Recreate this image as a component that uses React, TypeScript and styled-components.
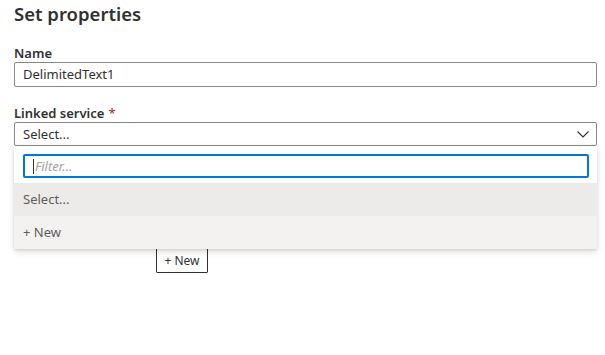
import React from 'react';
import styled, { createGlobalStyle } from 'styled-components';

const GlobalStyle = createGlobalStyle`
  body {
    margin: 0;
    background: #fff;
    font-family: "Segoe UI", "Noto Sans", "Liberation Sans", sans-serif;
    color: #323130;
  }
`;

const Page = styled.div`
  width: 605px;
  height: 355px;
  padding: 0 8px 0 14px;
  box-sizing: border-box;
  overflow: hidden;
`;

const Title = styled.h2`
  margin: 0;
  padding-top: 1px;
  font-size: 18.5px;
  font-weight: 600;
  line-height: 26px;
`;

const Field = styled.div<{ $top: number }>`
  margin-top: ${(p) => p.$top}px;
  position: relative;
`;

const Label = styled.label`
  display: block;
  font-size: 13px;
  font-weight: 600;
  line-height: 18px;
  margin-bottom: 0;
`;

const Required = styled.span`
  color: #a4262c;
  font-weight: 400;
  margin-left: 4px;
`;

const TextBox = styled.div`
  height: 25px;
  box-sizing: border-box;
  border: 1px solid #8a8886;
  border-radius: 2px;
  padding: 0 8px;
  font-size: 13px;
  line-height: 23px;
  color: #323130;
`;

const SelectBox = styled(TextBox)`
  display: flex;
  align-items: center;
  justify-content: space-between;
  height: 24px;
  line-height: 22px;
  padding-right: 6px;
`;

const Panel = styled.div`
  position: absolute;
  left: 0;
  right: 0;
  top: 100%;
  background: #fff;
  box-shadow: 0 3px 7px rgba(0, 0, 0, 0.13), 0 1px 2px rgba(0, 0, 0, 0.1);
  z-index: 10;
`;

const FilterWrap = styled.div`
  padding: 8px 8px 5px 9px;
`;

const FilterBox = styled.div`
  height: 24px;
  box-sizing: border-box;
  border: 2px solid #0078d4;
  border-radius: 2px;
  padding: 0 8px;
  display: flex;
  align-items: center;
  font-size: 13px;
  font-style: italic;
  color: #a19f9d;
`;

const Caret = styled.span`
  display: inline-block;
  width: 1px;
  height: 15px;
  background: #323130;
  margin-right: 1px;
`;

const Option = styled.div<{ $bg: string }>`
  height: 33px;
  line-height: 33px;
  padding: 0 9px;
  font-size: 13px;
  color: #605e5c;
  background: ${(p) => p.$bg};
`;

const ButtonRow = styled.div`
  margin-top: 102px;
  padding-left: 142px;
`;

const NewButton = styled.button`
  display: block;
  height: 25px;
  width: 52px;
  box-sizing: border-box;
  border: 1px solid #323130;
  border-radius: 1px;
  background: #fff;
  font-family: inherit;
  font-size: 12px;
  color: #323130;
  padding: 0;
`;

const Chevron = () => (
  <svg width="14" height="14" viewBox="0 0 14 14" fill="none">
    <path d="M1.5 4.5 L7 10 L12.5 4.5" stroke="#323130" strokeWidth="1.1" />
  </svg>
);

export default function App() {
  return (
    <Page>
      <GlobalStyle />
      <Title>Set properties</Title>
      <Field $top={17}>
        <Label>Name</Label>
        <TextBox>DelimitedText1</TextBox>
      </Field>
      <Field $top={17}>
        <Label>
          Linked service<Required>*</Required>
        </Label>
        <SelectBox>
          <span>Select...</span>
          <Chevron />
        </SelectBox>
        <Panel>
          <FilterWrap>
            <FilterBox>
              <Caret />
              Filter...
            </FilterBox>
          </FilterWrap>
          <Option $bg="#edebe9">Select...</Option>
          <Option $bg="#f3f2f1">+ New</Option>
        </Panel>
      </Field>
      <ButtonRow>
        <NewButton>+ New</NewButton>
      </ButtonRow>
    </Page>
  );
}
